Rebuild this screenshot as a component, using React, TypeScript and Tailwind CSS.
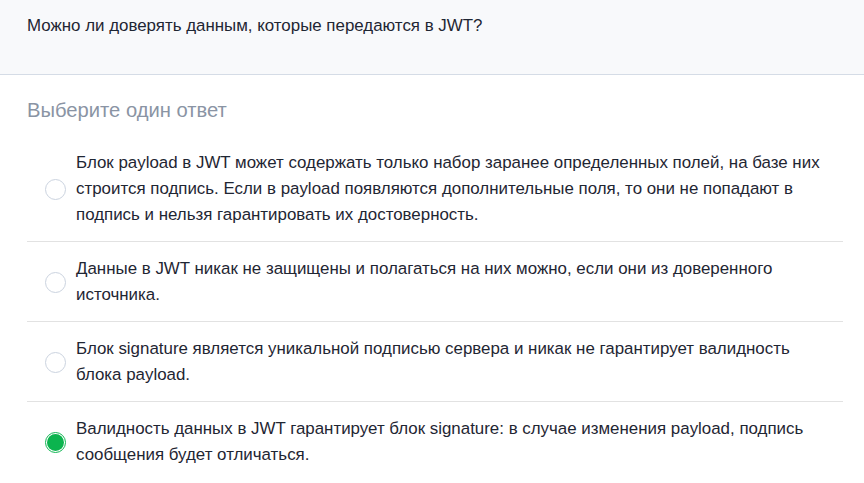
const options = [
  {
    text: 'Блок payload в JWT может содержать только набор заранее определенных полей, на базе них строится подпись. Если в payload появляются дополнительные поля, то они не попадают в подпись и нельзя гарантировать их достоверность.',
    checked: false,
  },
  {
    text: 'Данные в JWT никак не защищены и полагаться на них можно, если они из доверенного источника.',
    checked: false,
  },
  {
    text: 'Блок signature является уникальной подписью сервера и никак не гарантирует валидность блока payload.',
    checked: false,
  },
  {
    text: 'Валидность данных в JWT гарантирует блок signature: в случае изменения payload, подпись сообщения будет отличаться.',
    checked: true,
  },
]

export default function App() {
  return (
    <div className="w-[864px] h-[483px] overflow-hidden bg-white font-['Liberation_Sans',Arial,sans-serif]">
      {/* Question */}
      <div className="h-[75px] bg-[#f8f9fb] border-b border-[#d5dce6] px-[27px] pt-[14px]">
        <p className="text-[16.9px] leading-6 text-[#1f2633]">
          Можно ли доверять данным, которые передаются в JWT?
        </p>
      </div>

      <div className="pl-[27px] pr-[21px]">
        <h2 className="pt-[22px] text-[20.2px] leading-[26px] text-[#8a94a4]">Выберите один ответ</h2>

        <div className="mt-[13px]">
          {options.map((o, i) => (
            <label
              key={i}
              className={
                'flex items-center gap-[10px] pl-[18px] pr-[10px] pt-[14px] pb-[13px] cursor-pointer ' +
                (i < options.length - 1 ? 'border-b border-[#e2e2e2]' : '')
              }
            >
              {o.checked ? (
                <span className="w-[21px] h-[21px] shrink-0 rounded-full border border-[#10b552] p-[1px]">
                  <span className="block w-full h-full rounded-full bg-[#0bb44e]" />
                </span>
              ) : (
                <span className="w-[21px] h-[21px] shrink-0 rounded-full border border-[#cbd3df] bg-white" />
              )}
              <span className="text-[16.9px] leading-[26px] text-[#1f2633]">{o.text}</span>
            </label>
          ))}
        </div>
      </div>
    </div>
  )
}
